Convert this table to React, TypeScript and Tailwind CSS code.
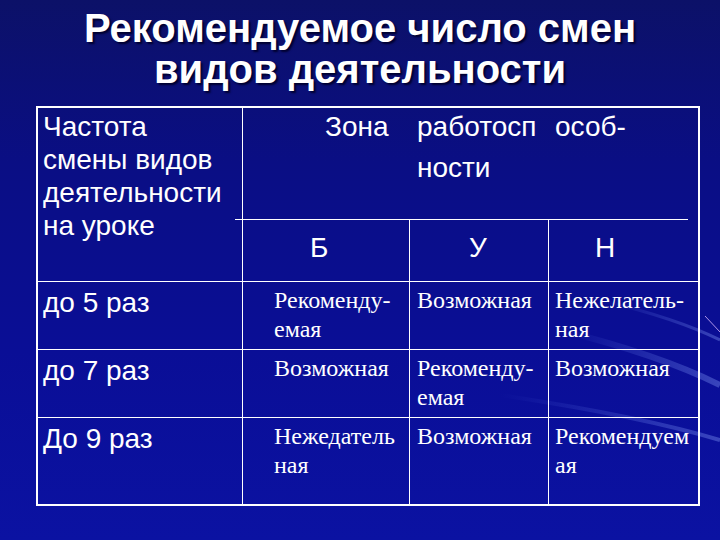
const sans = "font-['Liberation_Sans',Arial,sans-serif]";
const serif = "font-['Liberation_Serif','Times_New_Roman',serif]";

const rows = [
  { label: "до 5 раз", b: ["Рекоменду-", "емая"], u: ["Возможная"], n: ["Нежелатель-", "ная"] },
  { label: "до 7 раз", b: ["Возможная"], u: ["Рекоменду-", "емая"], n: ["Возможная"] },
  { label: "До 9 раз", b: ["Нежедатель", "ная"], u: ["Возможная"], n: ["Рекомендуем", "ая"] },
];

const Lines = ({ lines }: { lines: string[] }) => (
  <>
    {lines.map((l, i) => (
      <div key={i}>{l}</div>
    ))}
  </>
);

const Streaks = () => (
  <svg className="absolute inset-0 pointer-events-none" width="720" height="540" viewBox="0 0 720 540">
    <defs>
      <linearGradient id="st" x1="0" y1="0" x2="1" y2="0">
        <stop offset="0" stopColor="#6f8cff" stopOpacity="0" />
        <stop offset="1" stopColor="#8fa8ff" stopOpacity="0.35" />
      </linearGradient>
    </defs>
    <path d="M560 330 C 620 345, 680 365, 720 385" stroke="url(#st)" strokeWidth="6" fill="none" />
    <path d="M600 300 C 650 312, 690 325, 720 340" stroke="url(#st)" strokeWidth="3" fill="none" />
    <path d="M500 395 C 600 410, 670 425, 720 440" stroke="url(#st)" strokeWidth="4" fill="none" />
    <path d="M705 316 L 720 332" stroke="#d9b8ff" strokeWidth="1" opacity="0.8" />
  </svg>
);

export default function App() {
  return (
    <div className="relative w-[720px] h-[540px] overflow-hidden bg-[linear-gradient(180deg,#0c1168_0%,#0a0e84_30%,#0a0e96_65%,#0b12a2_100%)]">
      <Streaks />
      <div className="relative flex flex-col">
        <h1
          className={`${sans} pt-[8px] text-center text-[40px] leading-[41px] font-bold text-white [text-shadow:2px_2px_2px_#000030]`}
        >
          Рекомендуемое число смен
          <br />
          видов деятельности
        </h1>

        <div className="ml-[36px] mt-[16px] w-[664px] h-[400px] border-2 border-white text-white">
          <div className="grid grid-cols-[205px_167px_139px_149px] grid-rows-[112px_62px_68px_68px_86px]">
            <div className={`${sans} row-span-2 border-r border-b border-white pl-[5px] pt-[2px] text-[28px] leading-[33px]`}>
              Частота
              <br />
              смены видов
              <br />
              деятельности
              <br />
              на уроке
            </div>

            <div className={`${sans} col-span-3 -ml-[8px] mr-[10px] flex border-b border-white text-[28px] leading-[33px]`}>
              <div className="w-[175px] pl-[90px] pt-[2px]">Зона</div>
              <div className="w-[139px] pl-[7px] pt-[2px]">
                <div>работосп</div>
                <div className="mt-[8px]">ности</div>
              </div>
              <div className="pl-[6px] pt-[2px]">особ-</div>
            </div>

            <div className={`${sans} border-r border-b border-white pl-[67px] pt-[11px] text-[28px] leading-[33px]`}>Б</div>
            <div className={`${sans} border-r border-b border-white pl-[59px] pt-[11px] text-[28px] leading-[33px]`}>У</div>
            <div className={`${sans} border-b border-white pl-[46px] pt-[11px] text-[28px] leading-[33px]`}>Н</div>

            {rows.map((r, i) => {
              const last = i === rows.length - 1;
              const bb = last ? "" : "border-b";
              return [
                <div key={`a${i}`} className={`${sans} ${bb} border-r border-white pl-[5px] pt-[4px] text-[28px] leading-[33px]`}>
                  {r.label}
                </div>,
                <div key={`b${i}`} className={`${serif} ${bb} border-r border-white pl-[31px] pt-[4px] text-[24px] leading-[29px] whitespace-nowrap`}>
                  <Lines lines={r.b} />
                </div>,
                <div key={`c${i}`} className={`${serif} ${bb} border-r border-white pl-[7px] pt-[4px] text-[24px] leading-[29px] whitespace-nowrap`}>
                  <Lines lines={r.u} />
                </div>,
                <div key={`d${i}`} className={`${serif} ${bb} border-white pl-[6px] pt-[4px] text-[24px] leading-[29px] whitespace-nowrap`}>
                  <Lines lines={r.n} />
                </div>,
              ];
            })}
          </div>
        </div>
      </div>
    </div>
  );
}
